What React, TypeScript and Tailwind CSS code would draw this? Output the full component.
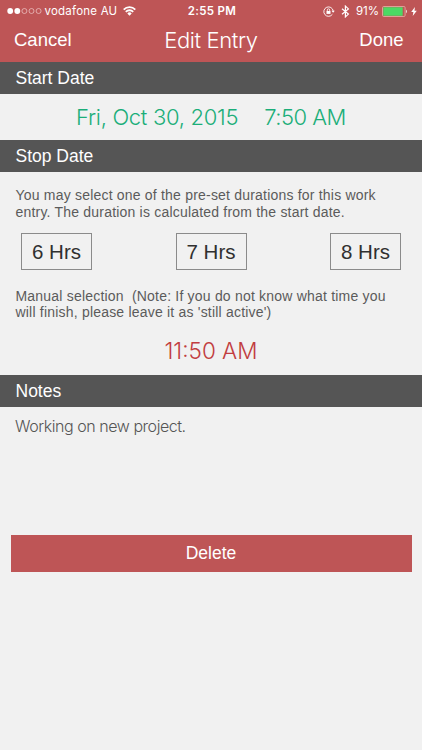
import type { ReactNode } from "react";

const durations = ["6 Hrs", "7 Hrs", "8 Hrs"];

function SignalDots() {
  return (
    <svg width="36" height="8" viewBox="0 0 36 8" fill="none">
      {[0, 1, 2, 3, 4].map((i) => (
        <circle
          key={i}
          cx={3.2 + i * 7.1}
          cy="4"
          r={i < 2 ? 2.9 : 2.5}
          fill={i < 2 ? "#fff" : "none"}
          stroke={i < 2 ? "none" : "#f0cccc"}
          strokeWidth="0.7"
        />
      ))}
    </svg>
  );
}

function WifiIcon() {
  return (
    <svg width="13" height="10" viewBox="0 0 13 10" fill="none" stroke="#fff" strokeWidth="1.8">
      <path d="M0.7 3.6a8.2 8.2 0 0 1 11.6 0" />
      <path d="M2.8 5.8a5.2 5.2 0 0 1 7.4 0" />
      <path d="M6.5 9.8 4.3 7.4a3 3 0 0 1 4.4 0z" fill="#fff" stroke="none" />
    </svg>
  );
}

function RotationLockIcon() {
  return (
    <svg width="12" height="11" viewBox="0 0 12 11" fill="none" stroke="#fff" strokeWidth="0.9">
      <path d="M9.4 8.3A4.7 4.7 0 1 1 10.2 5" />
      <path d="M8.5 4.8h3.3l-1.65 2z" fill="#fff" stroke="none" />
      <rect x="3.5" y="5" width="4" height="2.9" fill="#fff" stroke="none" />
      <path d="M4.3 5.1V4a1.2 1.2 0 0 1 2.4 0v1.1" strokeWidth="0.8" />
    </svg>
  );
}

function BluetoothIcon() {
  return (
    <svg width="9" height="13" viewBox="0 0 9 13" fill="none" stroke="#fff" strokeWidth="1.2">
      <path d="M1 3.7 7.4 9.1 4.4 11.9V1.1l3 2.8L1 9.3" />
    </svg>
  );
}

function BatteryIcon() {
  return (
    <svg width="27" height="11" viewBox="0 0 27 11" fill="none">
      <rect x="0.5" y="0.5" width="22.6" height="10" rx="1.2" stroke="#e7b5a9" strokeWidth="0.8" />
      <rect x="1.3" y="1.3" width="19.4" height="8.4" rx="0.5" fill="#4cd964" />
      <path d="M24.2 3.8c1 .3 1 3.1 0 3.4z" fill="#fff" />
    </svg>
  );
}

function BoltIcon() {
  return (
    <svg width="6" height="9" viewBox="0 0 6 9" fill="#fff">
      <path d="M3.9 0 0.2 5h2.2L1.7 9 5.8 3.7H3.5z" />
    </svg>
  );
}

function StatusBar() {
  return (
    <div className="grid h-[22px] grid-cols-[1fr_auto_1fr] items-center pl-[7px] pr-[5px] text-[11.5px] leading-[22px]">
      <div className="flex items-center">
        <SignalDots />
        <span className="ml-[1.5px] mr-[6px] tracking-[0.22px]">vodafone AU</span>
        <WifiIcon />
      </div>
      <span className="font-semibold tracking-[0.3px]">2:55 PM</span>
      <div className="flex items-center justify-end">
        <RotationLockIcon />
        <span className="ml-[6px] mr-[6px]">
          <BluetoothIcon />
        </span>
        <span className="mr-[3px]">91%</span>
        <BatteryIcon />
        <span className="ml-[2px]">
          <BoltIcon />
        </span>
      </div>
    </div>
  );
}

function SectionTitle({ children }: { children: ReactNode }) {
  return (
    <h2 className="flex h-8 items-center bg-[#555555] pl-[15.5px] text-[17.5px] leading-8 text-white">
      {children}
    </h2>
  );
}

export default function App() {
  return (
    <div className="flex h-[750px] w-[422px] flex-col overflow-hidden bg-[#f1f1f1] font-['Liberation_Sans',Arial,sans-serif] whitespace-pre">
      <header className="h-[62px] bg-[#be5556] font-['Inter','Liberation_Sans',sans-serif] text-white">
        <StatusBar />
        <div className="grid h-[36px] grid-cols-[1fr_auto_1fr] items-center px-[14px] font-['Liberation_Sans',Arial,sans-serif] text-[18.5px]">
          <button className="text-left">Cancel</button>
          <h1 className="font-['Inter','Liberation_Sans',sans-serif] text-[22px] font-light tracking-[-0.4px]">
            Edit Entry
          </h1>
          <button className="pr-[4.5px] text-right">Done</button>
        </div>
      </header>

      <SectionTitle>Start Date</SectionTitle>
      <div className="flex h-[46px] items-center justify-center gap-[26px] font-['Inter','Liberation_Sans',sans-serif] text-[22px] font-light tracking-[-0.3px] text-[#1bae79]">
        <span>Fri, Oct 30, 2015</span>
        <span className="tracking-[-0.5px]">7:50 AM</span>
      </div>

      <SectionTitle>Stop Date</SectionTitle>
      <section className="h-[203px] pt-[15px] text-[#5b5b5b]">
        <p className="pl-[15.5px] text-[14px] leading-[17px] tracking-[0.2px]">
          {"You may select one of the pre-set durations for this work\nentry. The duration is calculated from the start date."}
        </p>
        <div className="mt-[12px] flex justify-between px-[21px]">
          {durations.map((label) => (
            <button
              key={label}
              className="h-[37px] w-[71px] border border-[#8b8b8b] text-[20.5px] leading-[35px] text-[#303030]"
            >
              {label}
            </button>
          ))}
        </div>
        <p className="mt-[18px] pl-[15.5px] text-[14px] leading-[16px] tracking-[0.2px]">
          {"Manual selection  (Note: If you do not know what time you\nwill finish, please leave it as 'still active')"}
        </p>
        <p className="mt-[17px] text-center font-['Inter','Liberation_Sans',sans-serif] text-[22.5px] leading-[28px] font-light text-[#c13d40]">
          11:50 AM
        </p>
      </section>

      <SectionTitle>Notes</SectionTitle>
      <p className="h-[128px] pt-[9px] pl-[15px] font-['Inter','Liberation_Sans',sans-serif] text-[16px] leading-5 font-light tracking-[-0.45px] text-[#555555]">
        Working on new project.
      </p>
      <button className="mx-[10.5px] h-[36.5px] bg-[#be5556] text-[17.5px] text-white">Delete</button>
    </div>
  );
}
